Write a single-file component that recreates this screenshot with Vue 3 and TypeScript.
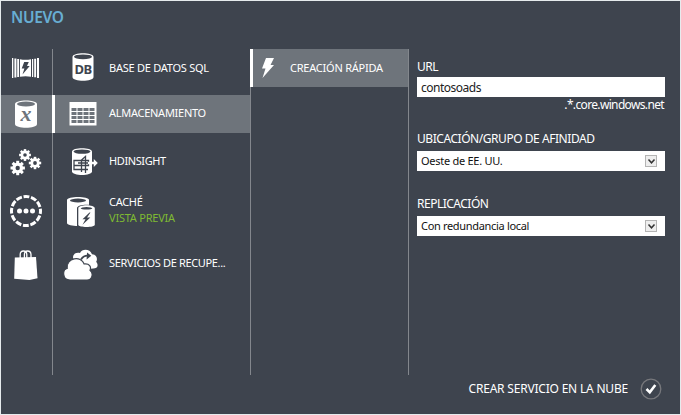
<script setup lang="ts">
import { ref } from 'vue'

interface Item { label: string; icon: string; note?: string; active?: boolean; spacing: string }

const categories: string[] = ['compute', 'data', 'gears', 'network', 'store']
const items: Item[] = [
  { label: 'BASE DE DATOS SQL', icon: 'db', spacing: '-0.25px' },
  { label: 'ALMACENAMIENTO', icon: 'table', active: true, spacing: '-0.27px' },
  { label: 'HDINSIGHT', icon: 'hd', spacing: '-0.4px' },
  { label: 'CACHÉ', icon: 'cache', note: 'VISTA PREVIA', spacing: '-0.3px' },
  { label: 'SERVICIOS DE RECUPE...', icon: 'cloud', spacing: '-0.35px' },
]
const url = ref('contosoads')
const gears = [
  { x: 25, y: 10, s: 0.82 },
  { x: 17.7, y: 23, s: 1 },
  { x: 35, y: 18, s: 0.86 },
]
const teeth = [0, 45, 90, 135]
const selects = [
  { label: 'UBICACIÓN/GRUPO DE AFINIDAD', value: 'Oeste de EE. UU.', cls: 'place' },
  { label: 'REPLICACIÓN', value: 'Con redundancia local', cls: 'repl' },
]
</script>

<template>
  <main class="panel">
    <h1>NUEVO</h1>
    <div class="columns">
      <nav class="rows cats">
        <div v-for="c in categories" :key="c" class="cat" :class="{ active: c === 'data' }">
          <svg v-if="c === 'compute'" width="28" height="22" viewBox="0 0 28 22" fill="#fff">
            <path d="M0 1h1.300v20H0zM2.400 1.400h2v19.200h-2zM5.200 1.900h1.900v18.200H5.200zM8 2.300Q13.500 3.400 19 2.300V19.700Q13.500 18.600 8 19.700z" />
            <path d="M20 2h1.200v18H20zM22.200 1.700h1.900v18.600h-1.900zM25 1h2v20h-2z" />
            <path d="M12.200 5h4.600L15 9h2.700L10.500 17.500l1.900-5.900H9.700z" fill="#3e444e" />
          </svg>
          <svg v-else-if="c === 'data'" width="22" height="28" viewBox="0 0 22 28">
            <path d="M0 4C0-.8 22-.8 22 4v20c0 5-22 5-22 0z" fill="#fff" />
            <ellipse cx="11" cy="4" rx="9" ry="2.500" fill="#6e747b" />
            <text x="11" y="21" text-anchor="middle" class="xglyph">x</text>
          </svg>
          <svg v-else-if="c === 'gears'" width="44" height="32" viewBox="4 0 44 32">
            <g v-for="(g, i) in gears" :key="i" :transform="`translate(${g.x} ${g.y}) scale(${g.s})`">
              <rect v-for="t in teeth" :key="t" x="-1.500" y="-7.200" width="3" height="14.400" fill="#fff" :transform="`rotate(${t})`" />
              <circle r="5.400" fill="#fff" /><circle r="2.200" fill="#3e444e" />
            </g>
          </svg>
          <svg v-else-if="c === 'network'" width="34" height="34" viewBox="0 0 34 34">
            <circle cx="17" cy="17" r="14.500" fill="none" stroke="#fff" stroke-width="3" stroke-dasharray="5.900 1.692" stroke-dashoffset="2.950" />
            <circle v-for="x in [10.500, 17, 23.500]" :key="x" :cx="x" cy="17" r="2.500" fill="#fff" />
          </svg>
          <svg v-else width="26" height="32" viewBox="0 0 26 32">
            <path d="M1.800 8.500L23 8l1.500 21.200-8 1.800-15.300-1.300z" fill="#fff" />
            <path d="M7.200 9V5.500q0-3.500 3.200-3.500T13.800 5.500V9M11.400 9V5.500Q11.400 2 14.600 2T18 5.500V9" fill="none" stroke="#fff" stroke-width="1.300" />
          </svg>
        </div>
      </nav>

      <nav class="rows services">
        <div v-for="it in items" :key="it.icon" class="service" :class="{ active: it.active }">
          <div class="icon" :class="it.icon">
            <svg v-if="it.icon === 'db'" width="22" height="30" viewBox="0 0 22 30">
              <path d="M.5 5C.5 0 21.500 0 21.500 5v20c0 5-21 5-21 0z" fill="#fff" />
              <ellipse cx="11" cy="4.800" rx="9" ry="2.400" fill="#3e444e" />
              <text x="11" y="21.800" text-anchor="middle" class="dbglyph">DB</text>
            </svg>
            <svg v-else-if="it.icon === 'table'" width="28" height="24" viewBox="0 0 28 24">
              <path d="M.5 0h27v23.500H.5z" fill="#fff" />
              <template v-for="r in 4" :key="r">
                <rect v-for="k in 4" :key="k" :x="k * 6 - 3.500" :y="r * 4 + 2" width="5" height="3" fill="#6e747b" />
              </template>
            </svg>
            <svg v-else-if="it.icon === 'hd'" width="30" height="30" viewBox="-3 0 30 30">
              <path d="M1 4.500C1 0 21 0 21 4.500v19.800c0 5-20 5-20 0z" fill="#fff" />
              <ellipse cx="11" cy="4.600" rx="8.500" ry="2.200" fill="#3e444e" />
              <path d="M3 13.500h14.500v5H3zM3 18.500v4h14M10.500 25V13l4-3.500V26M7 16h11" fill="none" stroke="#3e444e" stroke-width="1.300" />
              <path d="M17 14.800h5.800v-2.800l4 4-4 4v-2.800H17z" fill="#fff" />
            </svg>
            <svg v-else-if="it.icon === 'cache'" width="30" height="34" viewBox="0 0 30 34">
              <path d="M1 5C1 1 23 1 23 5v23c0 4-22 4-22 0z" fill="#fff" />
              <ellipse cx="12" cy="5.500" rx="8" ry="1.900" fill="#3e444e" />
              <path d="M11 13c0-4.500 19-4.500 19 0v22H11z" fill="#3e444e" />
              <path d="M12.300 13.300c0-4 16.500-4 16.500 0v16.400c0 3-16.500 3-16.500 0z" fill="#fff" />
              <ellipse cx="20.500" cy="13.300" rx="5.800" ry="1.200" fill="#3e444e" />
              <path d="M23.500 17.500l-7 6.700h3l-3 5.500 7.800-7.200h-3.300l3.500-5z" fill="#3e444e" />
            </svg>
            <svg v-else width="36" height="32" viewBox="0 0 36 32">
              <path d="M10 8.500C10 5 13 3 17 4c2-4.500 10-4.500 12 1.200 4.500.3 6 4.300 4.200 7.500 3 4 .8 6.800-3 6.800L15 21z" fill="#fff" />
              <path d="M18 10.500q2.500-3.800 6.500-3.800" fill="none" stroke="#3e444e" stroke-width="1.800" />
              <path d="M24 3.500l4.300 3.300-4.700 3.700z" fill="#3e444e" />
              <path d="M7 31C-1 31-.8 20.500 4.200 19.500 3.500 8.500 18 6.500 21.200 15c5.300-.8 7.300 3 5.800 6.300C31 24.500 29 31 24 31z" fill="#fff" stroke="#3e444e" stroke-width="1.200" />
            </svg>
          </div>
          <div class="name"><span :style="{ letterSpacing: it.spacing }">{{ it.label }}</span><small v-if="it.note">{{ it.note }}</small></div>
        </div>
      </nav>

      <section class="quick">
        <div class="quick-item active">
          <svg width="14" height="22" viewBox="0 0 14 22"><path d="M5 1h8L9.500 8H13L1.500 21l3-9.500H1z" fill="#fff" /></svg>
          <span>CREACIÓN RÁPIDA</span>
        </div>
      </section>

      <form class="form" @submit.prevent>
        <label class="url">URL</label>
        <input v-model="url" type="text" spellcheck="false" />
        <div class="suffix">.*.core.windows.net</div>
        <div v-for="s in selects" :key="s.label" class="field" :class="s.cls">
          <label>{{ s.label }}</label>
          <div class="select"><span>{{ s.value }}</span>
            <i><svg width="9" height="9" viewBox="0 0 9 9"><path d="M1.500 2.500l3 3.300 3-3.300" fill="none" stroke="#333" stroke-width="1.500" /></svg></i>
          </div>
        </div>
      </form>
    </div>
    <footer>
      <span>CREAR SERVICIO EN LA NUBE</span>
      <svg width="22" height="22" viewBox="0 0 22 22"><circle cx="11" cy="11" r="9.800" fill="none" stroke="#77787c" stroke-width="1.300" /><path d="M6.500 11l3.300 3.300L15.300 7" fill="none" stroke="#fff" stroke-width="2.600" /></svg>
    </footer>
  </main>
</template>

<style>
body { margin: 0; background: #e6ebed; }
</style>
<style scoped>
* { box-sizing: border-box; }
.panel { width: 681px; height: 415px; border: 1px solid #e6ebed; background: #3e444e; color: #fff; font-family: "Noto Sans", "Open Sans", sans-serif; font-size: 11px; overflow: hidden; display: flex; flex-direction: column; }
h1 { margin: 0; padding: 6px 0 0 10px; height: 48px; font-size: 15.500px; line-height: 20px; font-weight: 600; letter-spacing: -.35px; color: #68aed3; }
.columns { display: grid; grid-template-columns: 51px 198px 158px 1fr; height: 326px; }
.rows { display: grid; grid-template-rows: 38px 38px 40px 44px 48px; row-gap: 8px; align-content: start; }
.cat { display: flex; align-items: center; justify-content: center; padding-right: 1px; }
.active { background: #6e747b; }
.services, .quick, .form { border-left: 1px solid #83878d; }
.service { display: flex; align-items: center; }
.service.active, .quick-item { border-left: 3px solid #fff; margin-left: -1px; }
.icon { width: 56px; display: flex; justify-content: center; flex: none; }
.icon.db { padding: 0 0 2px 3px; }
.icon.hd { padding: 2px 0 0 4px; }
.icon.cache { padding-top: 2px; }
.service.active .icon { width: 54px; padding-left: 1px; }
.name { display: flex; flex-direction: column; line-height: 16px; padding-bottom: 2px; white-space: nowrap; }
.service:first-child .name, .service:nth-child(3) .name { padding-bottom: 0; }
.service:last-child .name { padding-bottom: 4px; }
.name small { font-size: 11px; color: #7fba32; letter-spacing: -.22px; }
.quick-item { height: 38px; display: flex; align-items: center; padding-left: 8px; gap: 15px; letter-spacing: -.23px; white-space: nowrap; }
.quick-item span { padding-bottom: 2px; }
.form { padding: 10px 0 0 8px; font-size: 12px; }
label { display: block; line-height: 16px; letter-spacing: -.45px; }
input { display: block; width: 248px; height: 20px; margin: 2px 0 0; padding: 0 4px; border: 0; font: 12px "Noto Sans", sans-serif; letter-spacing: -.5px; color: #222; background: #fff; outline: 0; }
.suffix { width: 247px; text-align: right; line-height: 16px; letter-spacing: -.65px; }
.field { padding-top: 18px; }
.repl { padding-top: 25px; }
.select { width: 248px; height: 20px; margin-top: 4px; padding: 0 8px 0 4px; background: #fff; color: #111; font-size: 11px; letter-spacing: -.27px; display: flex; align-items: center; justify-content: space-between; }
.select span { padding-bottom: 2px; }
.repl label { letter-spacing: -.5px; }
.repl .select { letter-spacing: -.32px; }
.select i { width: 12px; height: 12px; border: 1px solid #b4b4b4; background: #eee; display: flex; align-items: center; justify-content: center; }
footer { display: flex; justify-content: flex-end; align-items: center; gap: 12px; padding: 0 18px 0 0; height: 27px; font-size: 12px; letter-spacing: -.2px; }
.xglyph { font: italic bold 22px "Liberation Serif", serif; fill: #6e747b; }
.dbglyph { font: bold 13px "Noto Sans", sans-serif; letter-spacing: -.5px; fill: #3e444e; }
</style>
